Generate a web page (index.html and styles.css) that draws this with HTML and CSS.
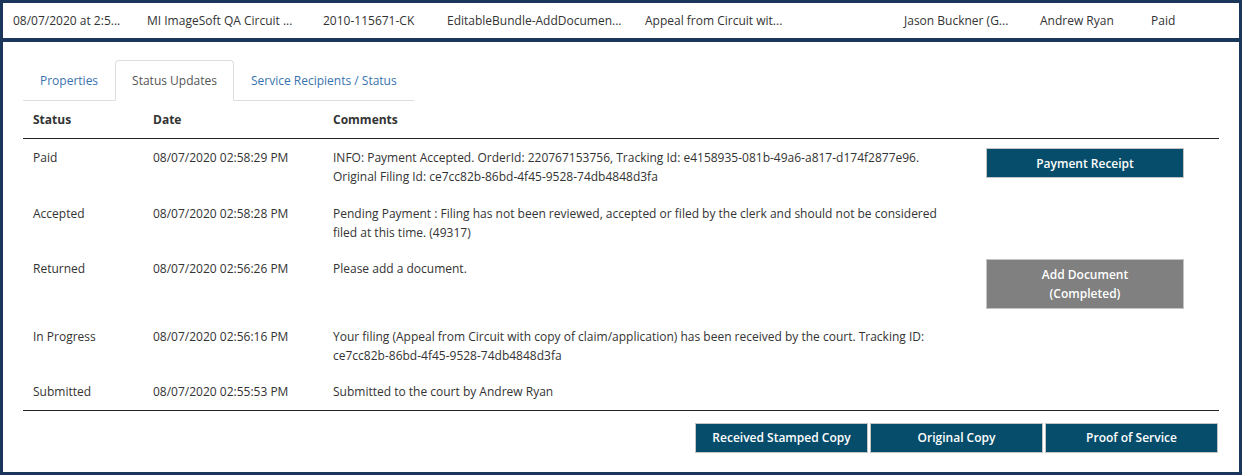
FILE: index.html
```html
<!DOCTYPE html>
<html lang="en">
<head>
    <meta charset="UTF-8">
    <meta name="viewport" content="width=device-width, initial-scale=1.0">
    <title>Filing - Status Updates</title>
    <link rel="stylesheet" href="styles.css">
</head>
<body>
    <div class="frame">
        <div class="summary">
            <span class="cell">08/07/2020 at 2:5...</span>
            <span class="cell">MI ImageSoft QA Circuit ...</span>
            <span class="cell">2010-115671-CK</span>
            <span class="cell">EditableBundle-AddDocumen...</span>
            <span class="cell">Appeal from Circuit wit...</span>
            <span class="cell">Jason Buckner (G...</span>
            <span class="cell">Andrew Ryan</span>
            <span class="cell">Paid</span>
        </div>
        <div class="detail">
            <ul class="tabs">
                <li><a href="#">Properties</a></li>
                <li class="active"><a href="#">Status Updates</a></li>
                <li><a href="#">Service Recipients / Status</a></li>
            </ul>
            <table class="updates">
                <colgroup>
                    <col class="col-status">
                    <col class="col-date">
                    <col class="col-comments">
                    <col>
                </colgroup>
                <thead>
                    <tr>
                        <th>Status</th>
                        <th>Date</th>
                        <th>Comments</th>
                        <th></th>
                    </tr>
                </thead>
                <tbody>
                    <tr>
                        <td>Paid</td>
                        <td>08/07/2020 02:58:29 PM</td>
                        <td class="comment">INFO: Payment Accepted. OrderId: 220767153756, Tracking Id: e4158935-081b-49a6-a817-d174f2877e96. Original Filing Id: ce7cc82b-86bd-4f45-9528-74db4848d3fa</td>
                        <td><button class="btn">Payment Receipt</button></td>
                    </tr>
                    <tr>
                        <td>Accepted</td>
                        <td>08/07/2020 02:58:28 PM</td>
                        <td class="comment">Pending Payment : Filing has not been reviewed, accepted or filed by the clerk and should not be considered filed at this time. (49317)</td>
                        <td></td>
                    </tr>
                    <tr>
                        <td>Returned</td>
                        <td>08/07/2020 02:56:26 PM</td>
                        <td class="comment">Please add a document.</td>
                        <td><button class="btn btn-done">Add Document<br>(Completed)</button></td>
                    </tr>
                    <tr>
                        <td>In Progress</td>
                        <td>08/07/2020 02:56:16 PM</td>
                        <td class="comment">Your filing (Appeal from Circuit with copy of claim/application) has been received by the court. Tracking ID: ce7cc82b-86bd-4f45-9528-74db4848d3fa</td>
                        <td></td>
                    </tr>
                    <tr>
                        <td>Submitted</td>
                        <td>08/07/2020 02:55:53 PM</td>
                        <td class="comment">Submitted to the court by Andrew Ryan</td>
                        <td></td>
                    </tr>
                </tbody>
            </table>
            <div class="doc-actions">
                <button class="btn btn-doc">Received Stamped Copy</button>
                <button class="btn btn-doc">Original Copy</button>
                <button class="btn btn-doc">Proof of Service</button>
            </div>
        </div>
    </div>
</body>
</html>
```

FILE: styles.css
```css
* {
    box-sizing: border-box;
    margin: 0;
    padding: 0;
}

body {
    font-family: "Open Sans", sans-serif;
    font-size: 12px;
    line-height: 19px;
    color: #333;
    background: #fff;
}

.frame {
    height: 475px;
    border: 3px solid #1b365b;
    display: flex;
    flex-direction: column;
}

.summary {
    height: 39px;
    border-bottom: 4px solid #1b365b;
    display: grid;
    grid-template-columns: 134px 176px 124px 198px 259px 136px 111px 1fr;
    align-items: center;
}

.summary .cell {
    padding: 0 10px;
    white-space: nowrap;
    overflow: hidden;
    text-overflow: ellipsis;
}

.detail {
    flex: 1;
    padding: 18px 20px 0;
}

.tabs {
    list-style: none;
    display: flex;
    width: fit-content;
    border-bottom: 1px solid #ddd;
}

.tabs li {
    margin-bottom: -1px;
}

.tabs a {
    display: block;
    padding: 10px 16px;
    border: 1px solid transparent;
    border-radius: 4px 4px 0 0;
    color: #3873ae;
    text-decoration: none;
}

.tabs .active a {
    color: #555;
    background: #fff;
    border-color: #ddd;
    border-bottom-color: #fff;
}

.updates {
    width: 100%;
    border-collapse: collapse;
    table-layout: fixed;
    border-bottom: 1px solid #222;
}

.col-status {
    width: 120px;
}

.col-date {
    width: 180px;
}

.col-comments {
    width: 653px;
}

.updates th {
    text-align: left;
    font-weight: 700;
    padding: 9px 10px;
    border-bottom: 1px solid #222;
}

.updates td {
    vertical-align: top;
    padding: 9px 10px 8.5px;
}

.updates td.comment {
    padding-right: 20px;
}

.btn {
    font-family: inherit;
    font-size: 12px;
    line-height: 19px;
    font-weight: 600;
    color: #fff;
    background: #064d6b;
    border: 1px solid #c4c4c4;
    cursor: pointer;
}

.updates .btn {
    display: block;
    width: 198px;
    height: 30px;
}

.updates .btn-done {
    height: 50px;
    background: #808080;
}

.doc-actions {
    display: flex;
    justify-content: flex-end;
    gap: 2px;
    margin-top: 12px;
    padding-right: 1px;
}

.btn-doc {
    width: 173px;
    height: 30px;
}
```
